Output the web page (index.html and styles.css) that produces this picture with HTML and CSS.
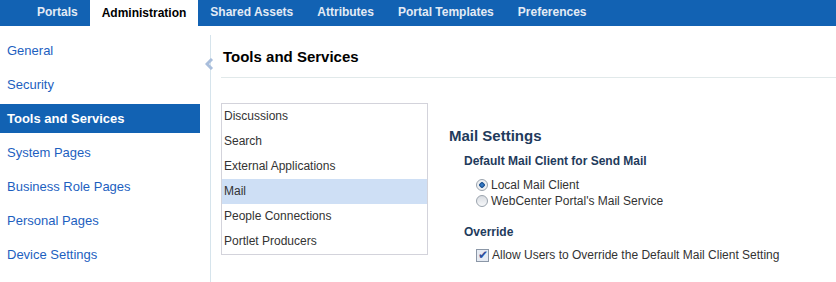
FILE: index.html
```html
<!DOCTYPE html>
<html lang="en">
<head>
    <meta charset="UTF-8">
    <title>Administration - Tools and Services</title>
    <link rel="stylesheet" href="styles.css">
</head>
<body>
    <!-- Top tabs -->
    <div class="tabbar">
        <a class="tab">Portals</a>
        <a class="tab active">Administration</a>
        <a class="tab">Shared Assets</a>
        <a class="tab">Attributes</a>
        <a class="tab">Portal Templates</a>
        <a class="tab">Preferences</a>
    </div>

    <div class="main">
        <!-- Left navigation -->
        <div class="sidenav">
            <a class="nav-item">General</a>
            <a class="nav-item">Security</a>
            <a class="nav-item selected">Tools and Services</a>
            <a class="nav-item">System Pages</a>
            <a class="nav-item">Business Role Pages</a>
            <a class="nav-item">Personal Pages</a>
            <a class="nav-item">Device Settings</a>
        </div>

        <div class="splitter">
            <svg class="collapse" width="9" height="12" viewBox="0 0 9 12">
                <path d="M7 1 L2 6 L7 11" fill="none" stroke="#a9bedc" stroke-width="3"/>
            </svg>
        </div>

        <!-- Content -->
        <div class="content">
            <h1 class="page-title">Tools and Services</h1>
            <div class="panel">
                <ul class="service-list">
                    <li>Discussions</li>
                    <li>Search</li>
                    <li>External Applications</li>
                    <li class="current">Mail</li>
                    <li>People Connections</li>
                    <li>Portlet Producers</li>
                </ul>

                <div class="settings">
                    <h2>Mail Settings</h2>
                    <h3>Default Mail Client for Send Mail</h3>
                    <label class="option"><input type="radio" name="client" checked> Local Mail Client</label>
                    <label class="option"><input type="radio" name="client"> WebCenter Portal's Mail Service</label>
                    <h3 class="override">Override</h3>
                    <label class="option"><input type="checkbox" checked> Allow Users to Override the Default Mail Client Setting</label>
                </div>
            </div>
        </div>
    </div>
</body>
</html>
```

FILE: styles.css
```css
body {
    margin: 0;
    font-family: Arial, "Liberation Sans", sans-serif;
    font-size: 13px;
    background-color: #ffffff;
    overflow: hidden;
}
.tabbar {
    display: flex;
    height: 26px;
    padding-left: 25px;
    background-color: #1262b3;
}
.tab {
    padding: 0 12px;
    line-height: 25px;
    font-size: 12px;
    font-weight: bold;
    color: #e3ebf5;
    cursor: pointer;
}
.tab.active {
    background-color: #ffffff;
    color: #000000;
    line-height: 26px;
}
.main {
    display: flex;
    height: 256px;
}
.sidenav {
    width: 200px;
    padding-top: 10px;
    display: flex;
    flex-direction: column;
}
.nav-item {
    height: 29px;
    line-height: 29px;
    margin-bottom: 5px;
    padding-left: 7px;
    color: #1d5fbf;
    cursor: pointer;
}
.nav-item.selected {
    background-color: #1262b3;
    color: #ffffff;
    font-weight: bold;
}
.splitter {
    position: relative;
    width: 10px;
    margin-top: 9px;
    border-right: 1px solid #d6e4ec;
}
.collapse {
    position: absolute;
    left: 5px;
    top: 23px;
}
.content {
    flex: 1;
    padding-left: 10px;
}
.page-title {
    margin: 0;
    padding: 22px 0 12px 2px;
    border-bottom: 1px solid #e1e9ea;
    font-size: 15px;
    color: #000000;
}
.panel {
    display: flex;
    padding-top: 25px;
}
.service-list {
    list-style: none;
    margin: 0;
    padding: 0;
    width: 205px;
    height: 150px;
    border: 1px solid #d3d3db;
}
.service-list li {
    height: 25px;
    line-height: 25px;
    padding-left: 2px;
    font-size: 12px;
    color: #333333;
}
.service-list li.current {
    background-color: #cedff5;
}
.settings {
    padding-left: 21px;
    padding-top: 24px;
}
.settings h2 {
    margin: 0 0 10px;
    font-size: 15px;
    color: #1f3b5c;
}
.settings h3 {
    margin: 0 0 9px 15px;
    font-size: 12px;
    color: #1f3b5c;
}
.settings h3.override {
    margin-top: 16px;
    margin-bottom: 8px;
}
.option {
    display: flex;
    align-items: center;
    height: 16px;
    margin-left: 27px;
    font-size: 12px;
    color: #333333;
}
.option input {
    appearance: none;
    width: 12px;
    height: 12px;
    margin: 0 3px 0 0;
    border: 1px solid #9aa3ad;
    background: linear-gradient(#d8dce1, #f7f8fa);
}
.option input[type="radio"] {
    border-radius: 50%;
}
.option input[type="radio"]:checked {
    background: radial-gradient(circle, #3f8ad8 0, #1b4f8f 2.5px, #e9ecef 3px, #f7f8fa 100%);
}
.option input[type="checkbox"] {
    position: relative;
    width: 13px;
    height: 13px;
    border-color: #8b97a7;
    background: #e6ebf3;
}
.option input[type="checkbox"]:checked::before {
    content: "\2714";
    position: absolute;
    left: 1px;
    top: -2px;
    font-size: 12px;
    color: #2c4f9e;
}
```
